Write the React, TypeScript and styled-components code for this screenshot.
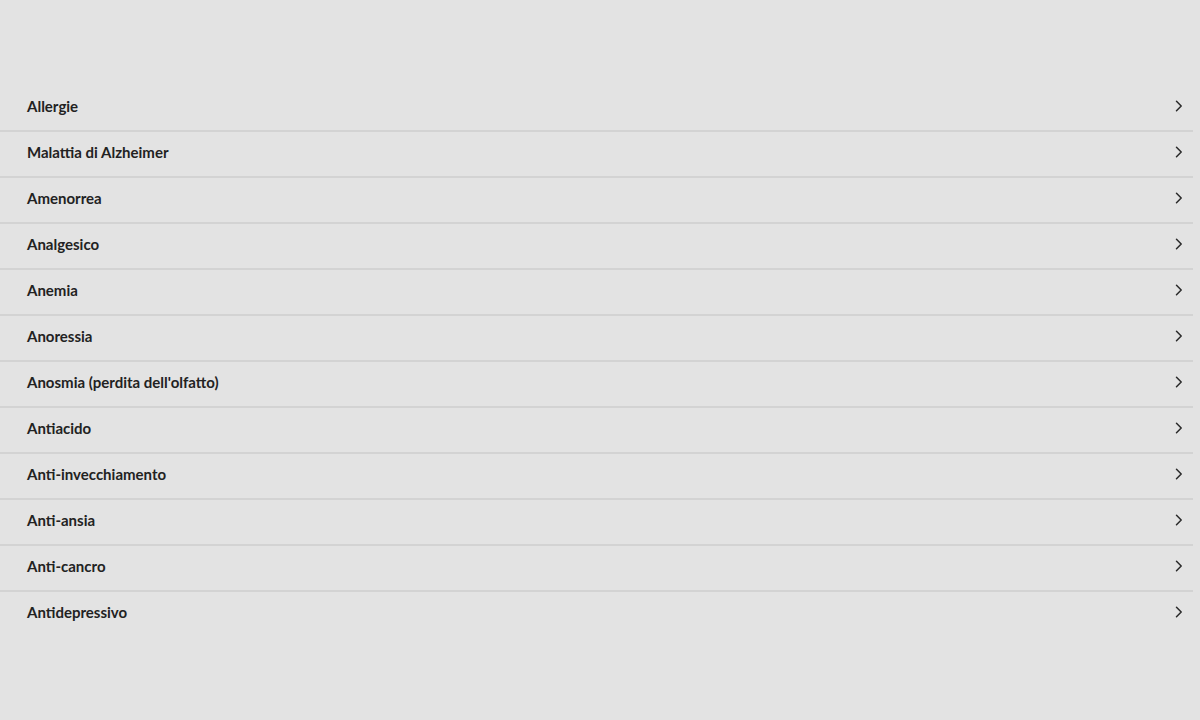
import styled, { createGlobalStyle } from 'styled-components'

const items = [
  'Allergie',
  'Malattia di Alzheimer',
  'Amenorrea',
  'Analgesico',
  'Anemia',
  'Anoressia',
  "Anosmia (perdita dell'olfatto)",
  'Antiacido',
  'Anti-invecchiamento',
  'Anti-ansia',
  'Anti-cancro',
  'Antidepressivo',
]

const GlobalStyle = createGlobalStyle`
  html, body {
    margin: 0;
    background: #e3e3e3;
    font-family: Lato, 'Open Sans', sans-serif;
  }
`

export default function App() {
  return (
    <>
      <GlobalStyle />
      <Page>
        <List>
          {items.map((label, i) => (
            <Item key={label} last={i === items.length - 1}>
              <Label>{label}</Label>
              <Chevron viewBox="0 0 8 12" aria-hidden="true">
                <path d="M1.5 1.2 L6.2 6 L1.5 10.8" />
              </Chevron>
            </Item>
          ))}
        </List>
      </Page>
    </>
  )
}

const Chevron = styled.svg`
  width: 8px;
  height: 12px;
  fill: none;
  stroke: #2a2a2a;
  stroke-width: 1.5;
  stroke-linecap: round;
  stroke-linejoin: round;
`

const Label = styled.span`
  font-size: 15px;
  font-weight: 700;
  color: #222;
`

const Item = styled.li<{ last: boolean }>`
  display: flex;
  align-items: center;
  justify-content: space-between;
  box-sizing: border-box;
  height: 46px;
  padding: 0 10px 4px 27px;
  border-bottom: 2px solid ${({ last }) => (last ? 'transparent' : '#d3d3d3')};
  cursor: pointer;
`

const List = styled.ul`
  list-style: none;
  margin: 0;
  padding: 0;
  width: 1193px;
`

const Page = styled.div`
  min-height: 720px;
  padding-top: 86px;
  box-sizing: border-box;
`
